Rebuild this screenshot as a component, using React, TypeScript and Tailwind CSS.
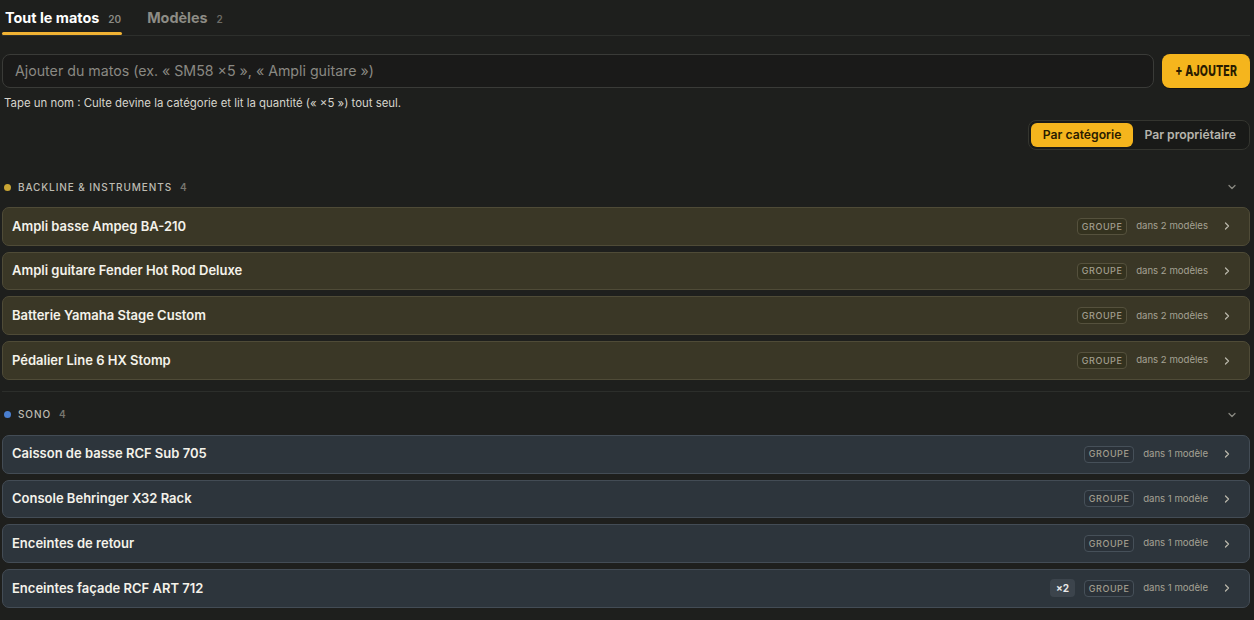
import { ChevronDown, ChevronRight } from "lucide-react";

interface Item {
  name: string;
  qty?: number;
  models: number;
}

interface Category {
  key: string;
  label: string;
  tone: "backline" | "sono";
  items: Item[];
}

const categories: Category[] = [
  {
    key: "backline",
    label: "Backline & instruments",
    tone: "backline",
    items: [
      { name: "Ampli basse Ampeg BA-210", models: 2 },
      { name: "Ampli guitare Fender Hot Rod Deluxe", models: 2 },
      { name: "Batterie Yamaha Stage Custom", models: 2 },
      { name: "Pédalier Line 6 HX Stomp", models: 2 },
    ],
  },
  {
    key: "sono",
    label: "Sono",
    tone: "sono",
    items: [
      { name: "Caisson de basse RCF Sub 705", models: 1 },
      { name: "Console Behringer X32 Rack", models: 1 },
      { name: "Enceintes de retour", models: 1 },
      { name: "Enceintes façade RCF ART 712", qty: 2, models: 1 },
    ],
  },
];

const toneStyles = {
  backline: {
    dot: "bg-[#c9a534]",
    row: "bg-[#3a3726] border-[#4f4b37]",
    badge: "border-[#55513d] bg-[#34321f]",
  },
  sono: {
    dot: "bg-[#4a7fd0]",
    row: "bg-[#2d353c] border-[#434c55]",
    badge: "border-[#465059] bg-[#2a3138]",
  },
};

function ItemRow({ item, tone }: { item: Item; tone: Category["tone"] }) {
  const s = toneStyles[tone];
  return (
    <div
      className={`flex h-[38.7px] items-center justify-between rounded-[7px] border pl-[9px] pr-[16px] ${s.row}`}
    >
      <span className="text-[13px] font-semibold text-[#f4f2ea]">{item.name}</span>
      <div className="flex items-center">
        {item.qty && (
          <span className="mr-[9px] flex h-[18px] items-center rounded-[4px] bg-[#3c444c] px-[6px] text-[10px] font-bold text-[#e8e8e8]">
            ×{item.qty}
          </span>
        )}
        <span
          className={`flex h-[17px] w-[50px] items-center justify-center rounded-[4px] border text-[9px] font-medium tracking-[0.06em] text-[#a19d8e] ${s.badge}`}
        >
          GROUPE
        </span>
        <span className="ml-[9px] text-[9.6px] text-[#a5a294]">
          dans {item.models} {item.models > 1 ? "modèles" : "modèle"}
        </span>
        <ChevronRight className="ml-[13px] h-[12px] w-[12px] text-[#b9b6aa]" strokeWidth={2.5} />
      </div>
    </div>
  );
}

function CategorySection({ cat, first }: { cat: Category; first: boolean }) {
  const s = toneStyles[cat.tone];
  return (
    <section className={first ? "pb-[11px]" : "border-t border-[#2c2e2b] pt-[12px]"}>
      <div className="mt-[1px] flex h-[20px] items-center justify-between pl-[2px] pr-[12px]">
        <div className="flex items-center">
          <span className={`h-[7px] w-[7px] rounded-full ${s.dot}`} />
          <span className="ml-[7px] text-[10px] font-medium uppercase tracking-[0.09em] text-[#bdbbb2]">
            {cat.label}
          </span>
          <span className="ml-[8px] text-[10px] font-semibold text-[#77766f]">{cat.items.length}</span>
        </div>
        <ChevronDown className="h-[12px] w-[12px] text-[#8a8982]" strokeWidth={2.5} />
      </div>
      <div className="mt-[10px] flex flex-col gap-[6px]">
        {cat.items.map((it) => (
          <ItemRow key={it.name} item={it} tone={cat.tone} />
        ))}
      </div>
    </section>
  );
}

export default function App() {
  return (
    <div
      className="min-h-[620px] bg-[#1e1f1d] pl-[2px] pr-[4px]"
      style={{ fontFamily: "Inter, 'Noto Sans', sans-serif" }}
    >
      {/* tabs */}
      <div className="flex h-[36px] items-end border-b border-[#2d2f2c]">
        <div className="flex h-full flex-col justify-between">
          <div className="flex items-baseline px-[3px] pt-[7px]">
            <span className="text-[14.4px] font-bold text-white">Tout le matos</span>
            <span className="ml-[9px] text-[10px] font-semibold text-[#8b8a83]">20</span>
          </div>
          <div className="h-[3px] w-[120px] rounded-full bg-[#f0b233]" />
        </div>
        <div className="ml-[23px] flex h-full items-baseline pt-[7px]">
          <span className="text-[14.4px] font-bold text-[#8d8c85]">Modèles</span>
          <span className="ml-[9px] text-[10px] font-semibold text-[#6d6c66]">2</span>
        </div>
      </div>

      {/* add item */}
      <div className="mt-[18px] flex gap-[8px]">
        <div className="flex h-[34px] flex-1 items-center rounded-[8px] border border-[#3a3b38] bg-[#1a1a19] px-[12px]">
          <span className="text-[14.2px] text-[#8a8983]">
            Ajouter du matos (ex. « SM58 ×5 », « Ampli guitare »)
          </span>
        </div>
        <button className="flex h-[34px] w-[88px] items-center justify-center rounded-[8px] bg-[#f5b51d] shadow-[0_1px_0_rgba(0,0,0,0.4)]">
          <span className="inline-block origin-center scale-x-[0.7] whitespace-nowrap text-[15px] font-extrabold tracking-[0.02em] text-[#2a1c00]">
            + AJOUTER
          </span>
        </button>
      </div>
      <p className="mt-[7px] pl-[2px] text-[11.4px] text-[#d6d4cc]">
        Tape un nom : Culte devine la catégorie et lit la quantité (« ×5 ») tout seul.
      </p>

      {/* grouping toggle */}
      <div className="mt-[8px] flex justify-end">
        <div className="flex h-[30px] items-center rounded-[8px] border border-[#34352f] bg-[#191a18] p-[2px]">
          <span className="flex h-[24px] items-center rounded-[6px] bg-[#f5b51d] px-[12px] text-[12.2px] font-semibold text-[#2a1c00]">
            Par catégorie
          </span>
          <span className="flex h-[24px] items-center px-[11px] text-[12.2px] font-semibold text-[#b7b5ad]">
            Par propriétaire
          </span>
        </div>
      </div>

      <div className="mt-[27px]">
        {categories.map((c, i) => (
          <CategorySection key={c.key} cat={c} first={i === 0} />
        ))}
      </div>
    </div>
  );
}
